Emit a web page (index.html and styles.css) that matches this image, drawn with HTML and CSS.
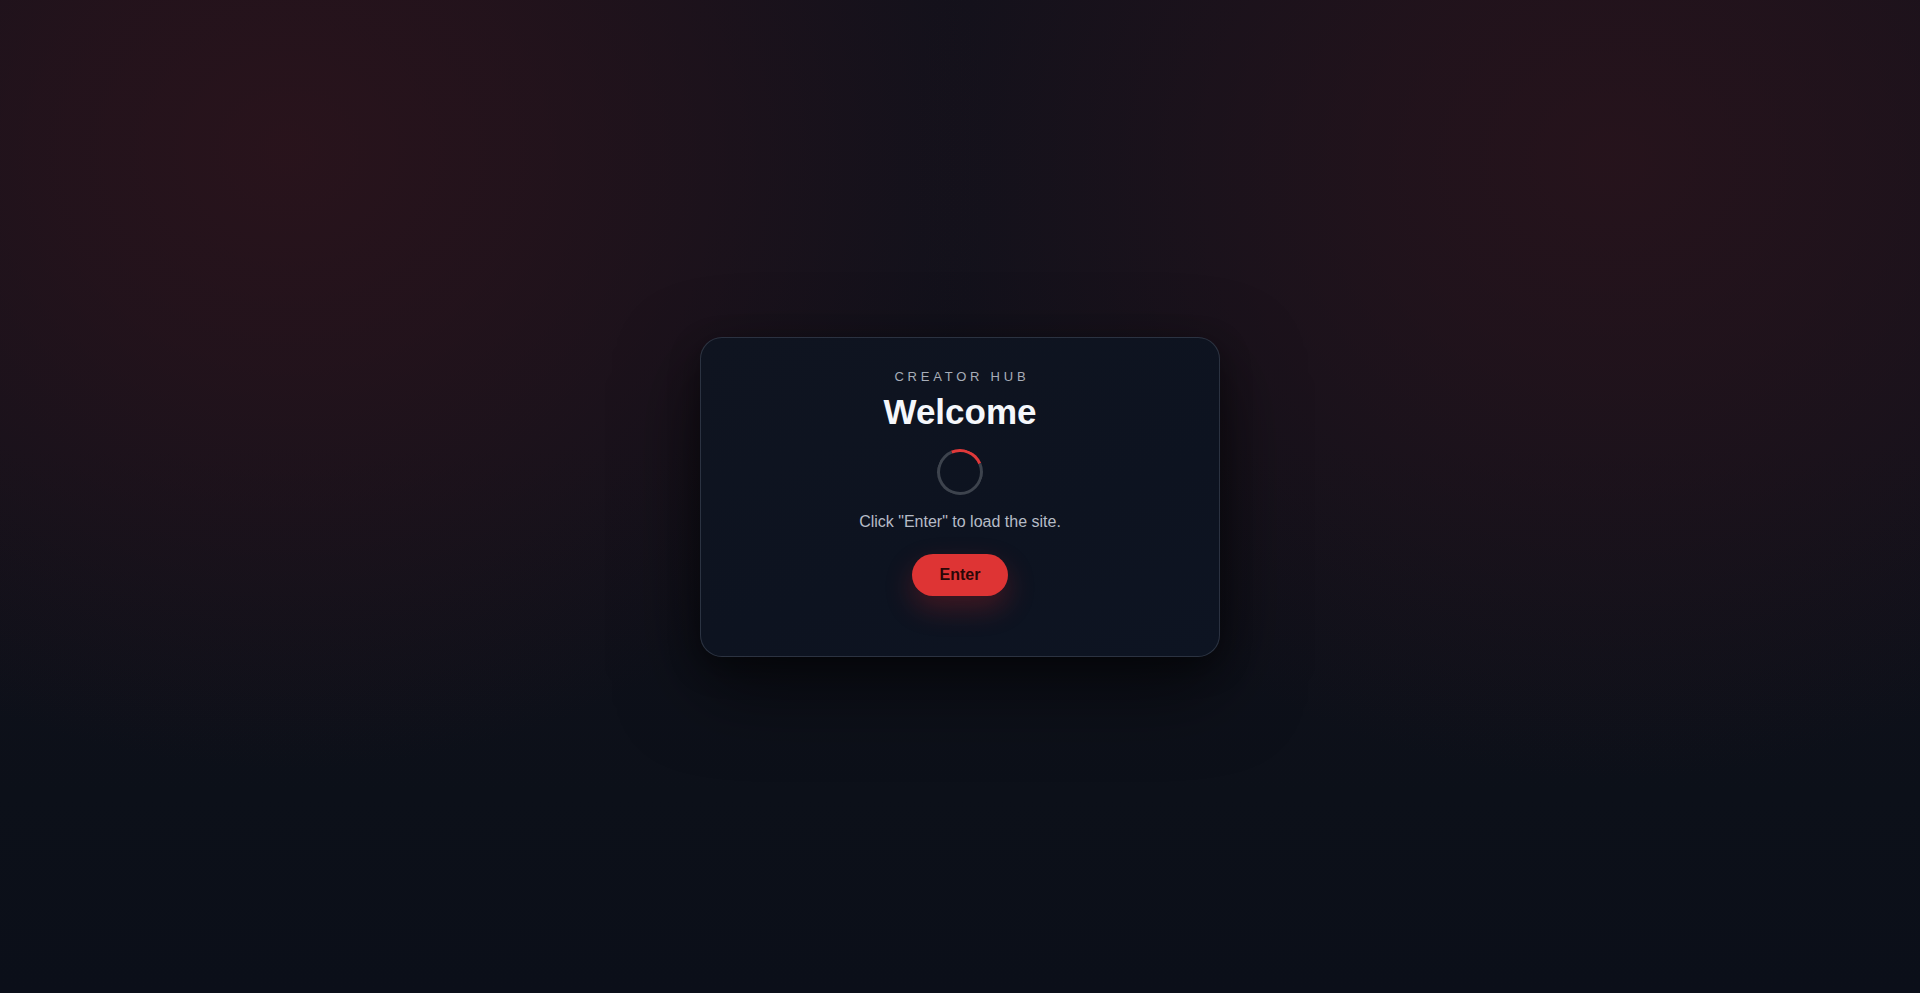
FILE: index.html
```html
<!DOCTYPE html>
<html lang="en">
<head>
<meta charset="utf-8">
<title>Creator Hub</title>
<link rel="stylesheet" href="styles.css">
</head>
<body>
  <main class="stage">
    <section class="card">
      <div class="eyebrow">CREATOR HUB</div>
      <h1 class="title">Welcome</h1>
      <div class="spinner" aria-hidden="true"></div>
      <p class="hint">Click "Enter" to load the site.</p>
      <button class="enter" type="button">Enter</button>
    </section>
  </main>
</body>
</html>
```

FILE: styles.css
```css
* { box-sizing: border-box; }

html, body {
  margin: 0;
  height: 100%;
}

body {
  font-family: "Liberation Sans", Arial, sans-serif;
  color: #e5e7eb;
  background-color: #0b0f19;
  background-image:
    radial-gradient(ellipse 700px 620px at 15% 15%, rgba(48, 20, 28, 0.75) 0%, rgba(48, 20, 28, 0.55) 35%, rgba(48, 20, 28, 0) 100%),
    radial-gradient(ellipse 700px 620px at 84% 16%, rgba(46, 20, 28, 0.7) 0%, rgba(46, 20, 28, 0.5) 35%, rgba(46, 20, 28, 0) 100%),
    linear-gradient(180deg, #13111b 0%, #11111b 45%, #0c1019 80%, #0b0f19 100%);
}

.stage {
  height: 100%;
  display: flex;
  align-items: center;
  justify-content: center;
}

.card {
  width: 520px;
  height: 320px;
  padding: 31px 24px 0;
  border: 1px solid rgba(148, 163, 184, 0.22);
  border-radius: 22px;
  background: linear-gradient(160deg, #0f1420 0%, #0d1320 60%, #0d1422 100%);
  box-shadow: 0 30px 80px rgba(0, 0, 0, 0.55), 0 10px 30px rgba(0, 0, 0, 0.35);
  display: flex;
  flex-direction: column;
  align-items: center;
  text-align: center;
}

.eyebrow {
  font-size: 13px;
  line-height: 15px;
  letter-spacing: 0.29em;
  margin-right: -0.29em;
  color: #a7adb8;
}

.title {
  margin: 7px 0 0;
  font-size: 35px;
  line-height: 42px;
  font-weight: 700;
  color: #f5f7fb;
}

.spinner {
  margin-top: 16px;
  width: 46px;
  height: 46px;
  border-radius: 50%;
  border: 3px solid #3d434d;
  border-top-color: #e0393a;
  transform: rotate(22deg);
}

.hint {
  margin: 15px 0 0;
  font-size: 16px;
  line-height: 24px;
  color: #b6bcc7;
}

.enter {
  margin-top: 20px;
  height: 42px;
  padding: 0 28px;
  border: 0;
  border-radius: 999px;
  background: #de3434;
  color: #2a0707;
  font-family: "Liberation Sans", Arial, sans-serif;
  font-size: 16px;
  font-weight: 700;
  box-shadow: 0 12px 28px rgba(220, 38, 38, 0.26);
  cursor: pointer;
}
```
